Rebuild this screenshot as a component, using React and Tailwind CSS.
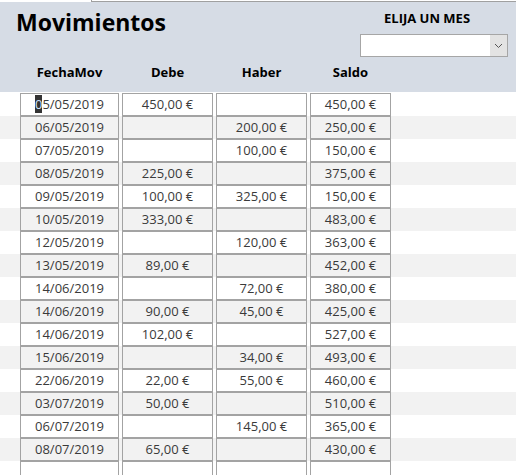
import React from "react";

const rows = [
  { fecha: "05/05/2019", debe: "450,00 €", haber: "", saldo: "450,00 €" },
  { fecha: "06/05/2019", debe: "", haber: "200,00 €", saldo: "250,00 €" },
  { fecha: "07/05/2019", debe: "", haber: "100,00 €", saldo: "150,00 €" },
  { fecha: "08/05/2019", debe: "225,00 €", haber: "", saldo: "375,00 €" },
  { fecha: "09/05/2019", debe: "100,00 €", haber: "325,00 €", saldo: "150,00 €" },
  { fecha: "10/05/2019", debe: "333,00 €", haber: "", saldo: "483,00 €" },
  { fecha: "12/05/2019", debe: "", haber: "120,00 €", saldo: "363,00 €" },
  { fecha: "13/05/2019", debe: "89,00 €", haber: "", saldo: "452,00 €" },
  { fecha: "14/06/2019", debe: "", haber: "72,00 €", saldo: "380,00 €" },
  { fecha: "14/06/2019", debe: "90,00 €", haber: "45,00 €", saldo: "425,00 €" },
  { fecha: "14/06/2019", debe: "102,00 €", haber: "", saldo: "527,00 €" },
  { fecha: "15/06/2019", debe: "", haber: "34,00 €", saldo: "493,00 €" },
  { fecha: "22/06/2019", debe: "22,00 €", haber: "55,00 €", saldo: "460,00 €" },
  { fecha: "03/07/2019", debe: "50,00 €", haber: "", saldo: "510,00 €" },
  { fecha: "06/07/2019", debe: "", haber: "145,00 €", saldo: "365,00 €" },
  { fecha: "08/07/2019", debe: "65,00 €", haber: "", saldo: "430,00 €" },
  { fecha: "", debe: "", haber: "", saldo: "" },
];

const Cell = ({ w, children }) => (
  <div
    className={`${w} h-[23px] border border-[#a3a3a3] flex items-center justify-center leading-none`}
  >
    {children}
  </div>
);

const App = () => {
  return (
    <div
      className="w-[516px] h-[475px] overflow-hidden bg-white text-[#3a3a3a]"
      style={{ fontFamily: '"Open Sans", "Noto Sans", sans-serif' }}
    >
      {/* window edge */}
      <div className="h-[2px] flex">
        <div className="w-[91px]" />
        <div className="flex-1 border-l border-b border-[#a0a0a0]" />
      </div>

      {/* header */}
      <div className="h-[90px] bg-[#d6dce5] flex flex-col text-black">
        <div className="flex justify-between">
          <h1 className="pl-[16px] pt-[8px] text-[23px] font-bold leading-[24px]">
            Movimientos
          </h1>
          <div className="w-[148px] mr-[8px] pt-[10px]">
            <div className="pl-[24px] text-[13px] font-bold leading-[13px]">
              ELIJA UN MES
            </div>
            <div className="mt-[9px] h-[23px] border border-[#a6a6a6] bg-white flex justify-end">
              <div className="w-[17px] h-full bg-[#e3e3e3] flex items-center justify-center">
                <svg width="9" height="6" viewBox="0 0 9 6">
                  <path d="M1 1 L4.5 4.5 L8 1" fill="none" stroke="#555" strokeWidth="1" />
                </svg>
              </div>
            </div>
          </div>
        </div>
        <div className="mt-auto mb-[13px] pl-[20px] flex gap-[3px] text-[13px] font-bold leading-[13px]">
          <div className="w-[99px] text-center">FechaMov</div>
          <div className="w-[91px] text-center">Debe</div>
          <div className="w-[91px] text-center">Haber</div>
          <div className="w-[81px] text-center">Saldo</div>
        </div>
      </div>

      {/* rows */}
      <div className="mt-px text-[13px]">
        {rows.map((r, i) => (
          <div
            key={i}
            className={`h-[23px] pl-[20px] flex gap-[3px] ${i % 2 === 1 ? "bg-[#f2f2f2]" : "bg-white"}`}
          >
            <Cell w="w-[99px]">
              {i === 0 ? (
                <span>
                  <span className="bg-[#333] text-[#cfe3ff]">0</span>
                  {r.fecha.slice(1)}
                </span>
              ) : (
                r.fecha
              )}
            </Cell>
            <Cell w="w-[91px]">{r.debe}</Cell>
            <Cell w="w-[91px]">{r.haber}</Cell>
            <Cell w="w-[81px]">{r.saldo}</Cell>
          </div>
        ))}
      </div>
    </div>
  );
};

export default App;
